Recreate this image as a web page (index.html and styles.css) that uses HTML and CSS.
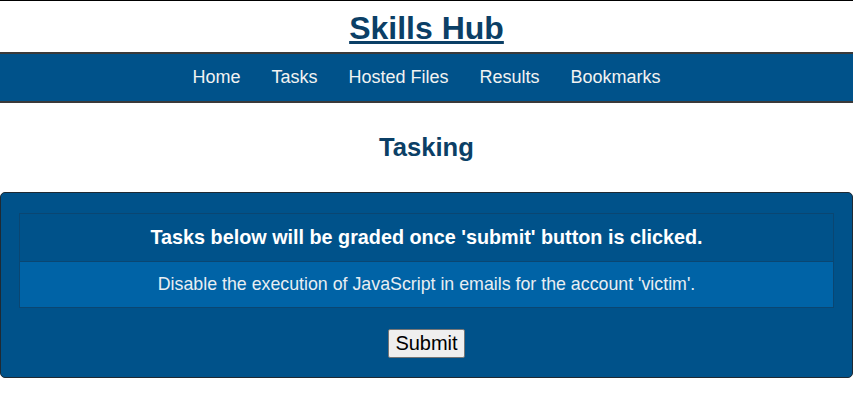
FILE: index.html
```html
<!DOCTYPE html>
<html>
<head>
<meta charset="utf-8">
<link rel="stylesheet" href="styles.css">
</head>
<body>
<header class="top">
  <h1 class="brand"><a href="#">Skills Hub</a></h1>
</header>
<nav class="nav">
  <a href="#">Home</a>
  <a href="#">Tasks</a>
  <a href="#">Hosted Files</a>
  <a href="#">Results</a>
  <a href="#">Bookmarks</a>
</nav>
<h2 class="title">Tasking</h2>
<section class="panel">
  <div class="table">
    <div class="row head">Tasks below will be graded once 'submit' button is clicked.</div>
    <div class="row task">Disable the execution of JavaScript in emails for the account 'victim'.</div>
  </div>
  <div class="actions"><button class="btn">Submit</button></div>
</section>
</body>
</html>
```
FILE: styles.css
```css
html, body { margin: 0; padding: 0; }
body {
  font-family: "Liberation Sans", Arial, sans-serif;
  background: #fff;
  border-top: 1px solid #000;
}
.top { height: 51px; display: flex; align-items: center; justify-content: center; }
.brand { margin: 0; font-size: 32px; font-weight: bold; line-height: 1; padding-top: 3px; }
.brand a { color: #0b3f66; text-decoration: underline; }
.nav {
  background: #00528a;
  border-top: 2px solid #3a3a3a;
  border-bottom: 2px solid #3a3a3a;
  height: 47px;
  display: flex;
  justify-content: center;
  align-items: center;
  gap: 31px;
}
.nav a { color: #f2f2f2; text-decoration: none; font-size: 18px; }
.title {
  margin: 0;
  padding-top: 30px;
  height: 58px;
  box-sizing: border-box;
  text-align: center;
  font-size: 25.6px;
  font-weight: bold;
  color: #0b3f66;
}
.panel {
  margin-top: 31px;
  background: #00528a;
  border: 1px solid #1f2a33;
  border-radius: 5px;
  padding: 20px 18px 19px;
}
.table { border: 1px solid #0a4672; }
.row { text-align: center; color: #fff; }
.head { font-weight: bold; font-size: 19.8px; height: 47px; display: flex; align-items: center; justify-content: center; border-bottom: 1px solid #0a4672; }
.task { background: #0063a6; color: #e8eef3; font-size: 17.8px; height: 45px; display: flex; align-items: center; justify-content: center; }
.actions { display: flex; justify-content: center; padding-top: 21px; }
.btn {
  font-family: "Liberation Sans", Arial, sans-serif;
  font-size: 20px;
  padding: 2px 6px;
  background: #efefef;
  color: #000;
  border: 1px solid #767676;
  border-radius: 2px;
}
```
